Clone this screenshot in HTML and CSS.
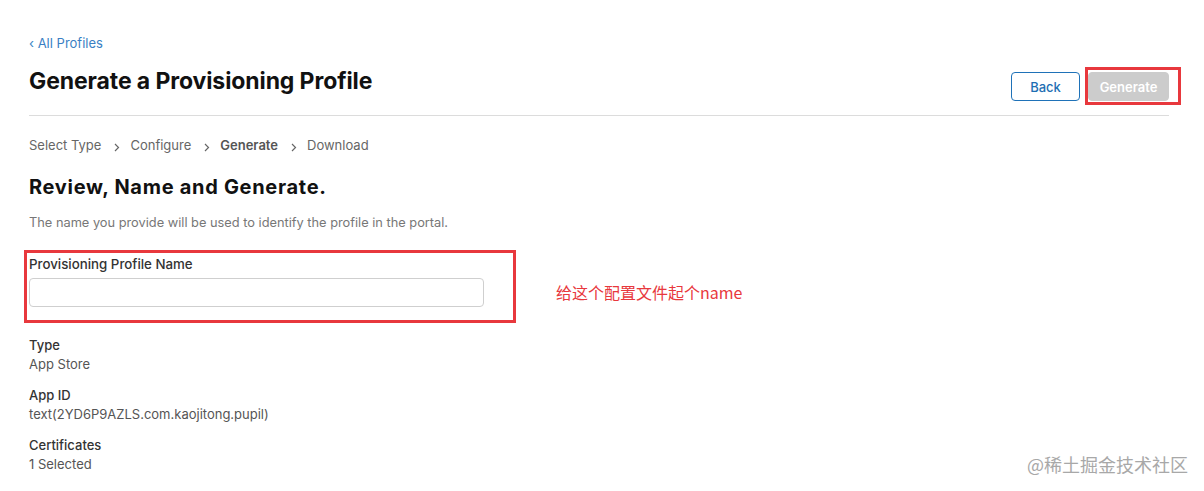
FILE: index.html
```html
<!DOCTYPE html>
<html lang="en">
<head>
<meta charset="utf-8">
<title>Generate a Provisioning Profile</title>
<link rel="stylesheet" href="styles.css">
</head>
<body>
<div class="page">
  <a class="back-link" href="#">‹ All Profiles</a>
  <header class="header">
    <h1 class="title">Generate a Provisioning Profile</h1>
    <div class="actions">
      <button class="btn btn-back" type="button">Back</button>
      <button class="btn btn-generate mark" type="button">Generate</button>
    </div>
  </header>

  <nav class="steps">
    <span class="step">Select Type</span>
    <svg class="chev" width="6" height="9" viewBox="0 0 6 9"><path d="M1 1l3.5 3.5L1 8" fill="none" stroke="#666" stroke-width="1.2"/></svg>
    <span class="step">Configure</span>
    <svg class="chev" width="6" height="9" viewBox="0 0 6 9"><path d="M1 1l3.5 3.5L1 8" fill="none" stroke="#666" stroke-width="1.2"/></svg>
    <span class="step step-current">Generate</span>
    <svg class="chev" width="6" height="9" viewBox="0 0 6 9"><path d="M1 1l3.5 3.5L1 8" fill="none" stroke="#666" stroke-width="1.2"/></svg>
    <span class="step">Download</span>
  </nav>

  <h2 class="subtitle">Review, Name and Generate.</h2>
  <p class="desc">The name you provide will be used to identify the profile in the portal.</p>

  <div class="field-row">
    <div class="field mark-field">
      <label class="field-label" for="pname">Provisioning Profile Name</label>
      <input class="field-input" id="pname" type="text">
    </div>
    <div class="annotation">给这个配置文件起个name</div>
  </div>

  <dl class="details">
    <div class="detail">
      <dt>Type</dt>
      <dd>App Store</dd>
    </div>
    <div class="detail">
      <dt>App ID</dt>
      <dd>text(2YD6P9AZLS.com.kaojitong.pupil)</dd>
    </div>
    <div class="detail">
      <dt>Certificates</dt>
      <dd>1 Selected</dd>
    </div>
  </dl>
</div>
<div class="watermark">@稀土掘金技术社区</div>
</body>
</html>
```

FILE: styles.css
```css
* { box-sizing: border-box; }

html, body {
  margin: 0;
  padding: 0;
  background: #fff;
}

body {
  font-family: Inter, "Noto Sans", "Liberation Sans", sans-serif;
  color: #333;
  width: 1204px;
  height: 491px;
  overflow: hidden;
  position: relative;
}

.page {
  padding: 34px 35px 0 29px;
}

.back-link {
  display: block;
  font-size: 13px;
  line-height: 18px;
  color: #3a7fc4;
  text-decoration: none;
}

.header {
  display: flex;
  justify-content: space-between;
  align-items: flex-start;
  margin-top: 15px;
  padding-bottom: 20px;
  border-bottom: 1px solid #dcdcdc;
}

.title {
  margin: 0;
  font-size: 23px;
  line-height: 28px;
  font-weight: 700;
  color: #111;
  letter-spacing: -0.1px;
}

.actions {
  display: flex;
  gap: 8px;
  padding-top: 5px;
  margin-bottom: -6px;
}

.btn {
  font-family: inherit;
  height: 29px;
  border-radius: 4px;
  font-size: 13px;
  font-weight: 500;
  padding: 0;
  cursor: pointer;
}

.btn-back {
  width: 69px;
  background: #fff;
  border: 1px solid #1f72b8;
  color: #1f6fb3;
}

.btn-generate {
  width: 81px;
  background: #cccccc;
  border: 1px solid #cccccc;
  color: #fff;
  font-weight: 600;
}

.mark {
  position: relative;
}

.mark::after {
  content: "";
  position: absolute;
  top: -6px;
  left: -4px;
  right: -13px;
  bottom: -5px;
  border: 3px solid #e8383d;
  pointer-events: none;
}

.steps {
  display: flex;
  align-items: center;
  margin-top: 19px;
  font-size: 13px;
  line-height: 20px;
  color: #666;
}

.step-current {
  font-weight: 600;
  color: #555;
}

.chev {
  margin: 4px 10px 0 13px;
}

.subtitle {
  margin: 20px 0 0;
  font-size: 20px;
  line-height: 24px;
  font-weight: 700;
  color: #111;
  letter-spacing: 0.7px;
}

.desc {
  margin: 15px 0 0;
  font-size: 12.8px;
  line-height: 18px;
  color: #777;
}

.field-row {
  display: flex;
  align-items: flex-end;
  margin-top: 23px;
}

.field {
  width: 455px;
  display: flex;
  flex-direction: column;
}

.mark-field {
  position: relative;
}

.mark-field::after {
  content: "";
  position: absolute;
  top: -5px;
  left: -5px;
  right: -32px;
  bottom: -16px;
  border: 3px solid #e8383d;
  pointer-events: none;
}

.field-label {
  font-size: 13.3px;
  line-height: 18px;
  font-weight: 500;
  color: #333;
}

.field-input {
  margin-top: 5px;
  height: 29px;
  border: 1px solid #cfcfcf;
  border-radius: 4px;
  background: #fff;
  font-family: inherit;
  font-size: 13px;
  padding: 0 8px;
  outline: none;
}

.annotation {
  margin-left: 72px;
  font-family: "Noto Sans CJK SC", "Noto Sans", sans-serif;
  font-size: 16px;
  line-height: 29px;
  color: #e8383d;
}

.details {
  margin: 29px 0 0;
}

.detail + .detail {
  margin-top: 12px;
}

.detail dt {
  font-size: 13px;
  line-height: 19px;
  font-weight: 500;
  color: #333;
}

.detail dd {
  margin: 0;
  font-size: 13px;
  line-height: 19px;
  color: #555;
}

.watermark {
  position: absolute;
  right: 16px;
  top: 452px;
  font-family: "Noto Sans CJK SC", sans-serif;
  font-size: 18px;
  line-height: 24px;
  color: #a8a8a8;
}
```
